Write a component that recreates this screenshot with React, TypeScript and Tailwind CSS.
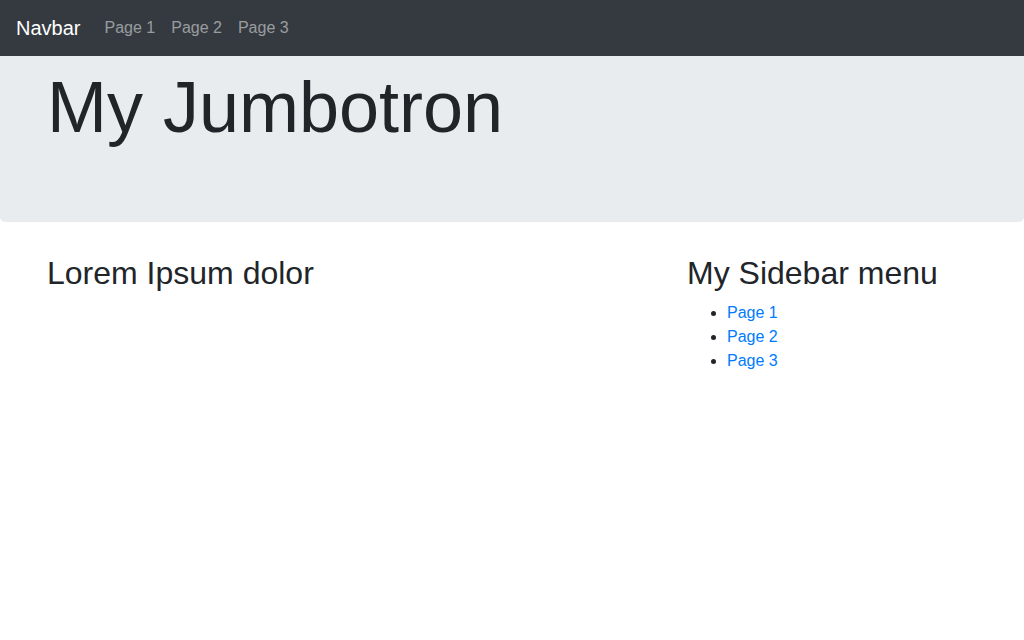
export default function App() {
  const links = ['Page 1', 'Page 2', 'Page 3'];

  return (
    <div className="min-h-screen bg-white text-[#212529] font-['Liberation_Sans',Arial,sans-serif] text-base leading-normal">
      {/* navbar */}
      <nav className="flex items-center h-14 px-4 bg-[#343a40]">
        <a href="#" className="mr-4 py-[5px] text-xl leading-[30px] text-white">
          Navbar
        </a>
        <ul className="flex">
          {links.map((l) => (
            <li key={l}>
              <a href="#" className="block px-2 py-2 leading-6 text-white/50">
                {l}
              </a>
            </li>
          ))}
        </ul>
      </nav>

      {/* jumbotron */}
      <div className="mb-8 px-8 pt-2 pb-16 bg-[#e9ecef] rounded-b-[0.3rem]">
        <div className="max-w-[960px] mx-auto px-[15px]">
          <h1 className="mb-2 text-[72px] leading-[1.2] font-normal">My Jumbotron</h1>
        </div>
      </div>

      {/* content */}
      <div className="max-w-[960px] mx-auto px-[15px]">
        <div className="flex -mx-[15px]">
          <div className="w-2/3 px-[15px]">
            <h2 className="mb-2 text-[32px] leading-[1.2]">Lorem Ipsum dolor</h2>
          </div>
          <div className="w-1/3 px-[15px]">
            <h2 className="mb-2 text-[32px] leading-[1.2]">My Sidebar menu</h2>
            <ul className="mb-4 pl-10 list-disc">
              {links.map((l) => (
                <li key={l} className="leading-6">
                  <a href="#" className="text-[#007bff]">
                    {l}
                  </a>
                </li>
              ))}
            </ul>
          </div>
        </div>
      </div>
    </div>
  );
}
